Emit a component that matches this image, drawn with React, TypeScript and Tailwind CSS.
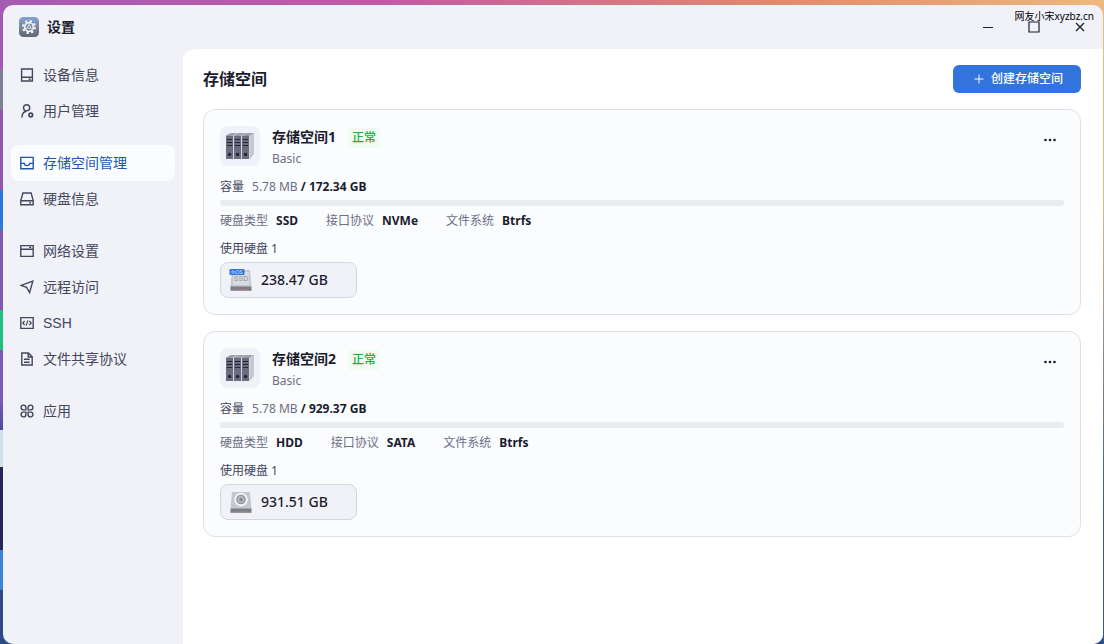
import type { ReactNode } from "react";

type NavItem = { label: string; icon: ReactNode; active?: boolean };

type Pool = {
  name: string;
  used: string;
  total: string;
  specs: { label: string; value: string }[];
  disk: { kind: "ssd" | "hdd"; size: string };
};

const POOLS: Pool[] = [
  {
    name: "存储空间1",
    used: "5.78 MB",
    total: "172.34 GB",
    specs: [
      { label: "硬盘类型", value: "SSD" },
      { label: "接口协议", value: "NVMe" },
      { label: "文件系统", value: "Btrfs" },
    ],
    disk: { kind: "ssd", size: "238.47 GB" },
  },
  {
    name: "存储空间2",
    used: "5.78 MB",
    total: "929.37 GB",
    specs: [
      { label: "硬盘类型", value: "HDD" },
      { label: "接口协议", value: "SATA" },
      { label: "文件系统", value: "Btrfs" },
    ],
    disk: { kind: "hdd", size: "931.51 GB" },
  },
];

function LineIcon({ children }: { children: ReactNode }) {
  return (
    <svg
      viewBox="0 0 14 14"
      className="size-3.5 shrink-0"
      fill="none"
      stroke="currentColor"
      strokeWidth="1.4"
      aria-hidden="true"
    >
      {children}
    </svg>
  );
}

const NAV: NavItem[][] = [
  [
    {
      label: "设备信息",
      icon: (
        <LineIcon>
          <path d="M1.6 1h10.8v12H1.6zM1.6 9.3h10.8M8.8 11.3h1.8" />
        </LineIcon>
      ),
    },
    {
      label: "用户管理",
      icon: (
        <LineIcon>
          <circle cx="6.6" cy="3.8" r="3.1" />
          <path d="M2 13.6c0-3.4 1.2-5.6 4.2-6.3" />
          <circle cx="10.8" cy="11" r="1.8" strokeWidth="1.7" />
        </LineIcon>
      ),
    },
  ],
  [
    {
      label: "存储空间管理",
      active: true,
      icon: (
        <LineIcon>
          <path d="M.8 1.4h12.4v11.4H.8zM.8 7.4h3.4c.3 1.4 1.3 2.2 2.8 2.2s2.5-.8 2.8-2.2h3.4" />
        </LineIcon>
      ),
    },
    {
      label: "硬盘信息",
      icon: (
        <LineIcon>
          <path d="M2.9 1h8.2l2.1 7.6v4.2H.8V8.6zM.8 8.7h12.4M9.2 10.8h1.8" />
        </LineIcon>
      ),
    },
  ],
  [
    {
      label: "网络设置",
      icon: (
        <LineIcon>
          <path d="M.8 1.6h12.4v10.8H.8zM.8 5.2h12.4M9 3.4h2.2" />
        </LineIcon>
      ),
    },
    {
      label: "远程访问",
      icon: (
        <LineIcon>
          <path d="M1.2 5.4 12.8 1.2 9.6 12.6 6.6 7.4z" />
        </LineIcon>
      ),
    },
    {
      label: "SSH",
      icon: (
        <LineIcon>
          <path d="M.8 1.6h12.4v10.8H.8z" />
          <path d="M4.6 5 2.8 7l1.8 2M9.4 5l1.8 2-1.8 2M7.9 4.4 6.1 9.6" strokeWidth="1.2" />
        </LineIcon>
      ),
    },
    {
      label: "文件共享协议",
      icon: (
        <LineIcon>
          <path d="M1.8 1h6.6l3.8 3.8V13H1.8zM8.2 1v4h4M4 7.2h5.6M4 10.2h5.6" />
        </LineIcon>
      ),
    },
  ],
  [
    {
      label: "应用",
      icon: (
        <LineIcon>
          <path d="M5.9 5.9H3.4a2.4 2.4 0 1 1 2.5-2.5zM8.1 5.9V3.4a2.4 2.4 0 1 1 2.5 2.5zM5.9 8.1v2.5a2.4 2.4 0 1 1-2.5-2.5zM8.1 8.1h2.5a2.4 2.4 0 1 1-2.5 2.5z" />
        </LineIcon>
      ),
    },
  ],
];

function SettingsLogo() {
  return (
    <svg viewBox="0 0 20 20" className="size-5" aria-hidden="true">
      <defs>
        <linearGradient id="logo" x1="0" y1="0" x2="0" y2="1">
          <stop offset="0" stopColor="#82a3d6" />
          <stop offset=".5" stopColor="#7b8799" />
          <stop offset="1" stopColor="#5f6675" />
        </linearGradient>
      </defs>
      <rect width="20" height="20" rx="4.5" fill="url(#logo)" />
      <circle
        cx="10"
        cy="10"
        r="6"
        fill="none"
        stroke="#eef2f7"
        strokeWidth="2"
        strokeDasharray="2.3 2.41"
      />
      <circle cx="10" cy="10" r="4.3" fill="none" stroke="#eef2f7" strokeWidth="1.7" />
      <circle cx="10" cy="10" r="1.5" fill="none" stroke="#dfe5ee" />
      <path d="M10 8.5V6M8.7 10.8l-2.2 1.3M11.3 10.8l2.2 1.3" stroke="#dfe5ee" strokeWidth=".9" />
    </svg>
  );
}

function RackIcon() {
  return (
    <svg viewBox="0 0 28 26" className="h-[26px] w-7" aria-hidden="true">
      <path d="M5 0h23v21l-4 5V3z" fill="#c6c8cf" />
      {[0, 8, 16].map((x) => (
        <g key={x}>
          <path d={`M${x} 2.5 ${x + 4.5} 0h7L${x + 7.5} 2.5z`} fill="#a0a2ae" />
          <rect x={x} y="2.5" width="7.2" height="23.5" rx=".6" fill="#6a6c80" />
          <path
            d={`M${x + 1} 6.5h5.2M${x + 1} 9.5h5.2M${x + 1} 12.5h5.2`}
            stroke="#23243a"
            strokeWidth="1.2"
          />
          <circle cx={x + 3.6} cy="21.5" r="1.7" fill="#23243a" />
        </g>
      ))}
    </svg>
  );
}

function DiskIcon({ kind }: { kind: "ssd" | "hdd" }) {
  return (
    <svg viewBox="0 0 24 24" className="size-6" aria-hidden="true">
      <path d="M3 2h18l1.5 17h-21z" fill="#c4c8cf" />
      <path d="M1.5 18.5h21v4.3h-21z" fill="#7a7e88" />
      <path d="M5.5 22h13" stroke="#d8866a" strokeWidth="1.2" strokeDasharray="1.5 1" />
      {kind === "ssd" ? (
        <>
          <path d="M4.5 4h15l.8 13H3.7z" fill="#d9dce1" />
          <text
            x="12"
            y="13"
            textAnchor="middle"
            fontSize="7"
            fontFamily="Liberation Sans"
            fill="#8d929c"
          >
            SSD
          </text>
          <rect x=".5" y="1" width="15" height="6" rx="1" fill="#2f74dc" />
          <text
            x="8"
            y="6"
            textAnchor="middle"
            fontSize="5"
            fontFamily="Liberation Sans"
            fill="#dbe8ff"
          >
            fnOS
          </text>
        </>
      ) : (
        <>
          <circle cx="12" cy="9.5" r="6.8" fill="#f3f4f6" />
          <circle cx="12" cy="9.5" r="4.8" fill="#9297a1" />
          <circle cx="12" cy="9.5" r="3.4" fill="#b3b7bf" />
          <circle cx="12" cy="9.5" r="1.6" fill="#7d828d" />
        </>
      )}
    </svg>
  );
}

function PoolCard({ pool }: { pool: Pool }) {
  return (
    <section className="rounded-xl border border-[#dfe0ea] bg-[#fbfcfe] p-4 text-xs leading-[18px] text-[#43465c]">
      <div className="flex items-start gap-3">
        <div className="flex size-10 shrink-0 items-center justify-center rounded-lg bg-[#f1f2f9]">
          <RackIcon />
        </div>
        <div className="h-10">
          <div className="flex items-end gap-3">
            <h2 className="text-sm leading-[22px] font-bold text-[#1b1c2e]">{pool.name}</h2>
            <span className="rounded bg-[#effcf2] px-1 leading-5 font-medium text-[#16b13c]">
              正常
            </span>
          </div>
          <p className="pt-0.5 text-[#6b6e85]">Basic</p>
        </div>
        <button
          type="button"
          aria-label="更多"
          className="ml-auto flex size-7 cursor-pointer items-center justify-center text-[#1b1c2e]"
        >
          <svg viewBox="0 0 12 4" className="h-1 w-3" fill="currentColor" aria-hidden="true">
            <circle cx="1.5" cy="2" r="1.3" />
            <circle cx="6" cy="2" r="1.3" />
            <circle cx="10.5" cy="2" r="1.3" />
          </svg>
        </button>
      </div>

      <div className="mt-3 flex gap-2">
        <span>容量</span>
        <span className="text-[#6b6e85]">
          {pool.used} <b className="font-bold text-[#1b1c2e]">/ {pool.total}</b>
        </span>
      </div>
      <div className="mt-1 h-1.5 rounded-full bg-[#ebecf0]" />

      <dl className="mt-1.5 flex gap-7">
        {pool.specs.map((spec) => (
          <div key={spec.label} className="flex gap-2">
            <dt className="text-[#6b6e85]">{spec.label}</dt>
            <dd className="font-bold text-[#1b1c2e]">{spec.value}</dd>
          </div>
        ))}
      </dl>

      <p className="mt-2.5">使用硬盘 1</p>
      <div className="mt-1 flex">
        <div className="flex h-9 items-center gap-2 rounded-lg border border-[#d3d4e0] bg-[#f1f2f8] pr-7 pl-2 text-sm font-medium text-[#1b1c2e]">
          <DiskIcon kind={pool.disk.kind} />
          {pool.disk.size}
        </div>
      </div>
    </section>
  );
}

export default function App() {
  return (
    <div className="relative flex h-screen flex-col bg-[#2e4a86] pt-[5px] pr-px pl-[3px] font-['Noto_Sans','Noto_Sans_CJK_SC',sans-serif]">
      {/* desktop wallpaper showing round the window */}
      <div className="absolute inset-x-0 top-0 h-4 bg-[linear-gradient(90deg,#a55bb4,#c25ba6_35%,#e08a6c_70%,#edb87e)]" />
      <div className="absolute inset-y-0 right-0 w-px bg-[linear-gradient(180deg,#edb87e_30%,#2f5c94_80%)]" />
      <div className="absolute inset-y-0 left-0 w-[3px] bg-[linear-gradient(180deg,#a35ab2_0_70px,#7d7f94_70px_110px,#9355ae_110px_190px,#2d78dc_190px_230px,#8558ae_230px_310px,#20c07a_310px_350px,#7c5bb4_350px_400px,#4a4aa0_430px,#cfe2ea_430px_467px,#272458_467px_550px,#3b82dc_550px_590px,#2e4a86_590px)]" />

      <div className="relative flex min-h-0 flex-1 flex-col overflow-hidden rounded-[10px] bg-[#f1f2f8]">
        <header className="flex h-11 shrink-0 items-center gap-2 pl-4">
          <SettingsLogo />
          <h1 className="text-sm font-bold text-[#1b1c2e]">设置</h1>
          <div className="ml-auto flex text-[#1b1c2e]">
            <button
              type="button"
              aria-label="最小化"
              className="flex h-7 w-[46px] cursor-pointer items-center justify-center"
            >
              <svg viewBox="0 0 12 12" className="size-3" stroke="currentColor" aria-hidden="true">
                <path d="M1 6.5h10" />
              </svg>
            </button>
            <button
              type="button"
              aria-label="最大化"
              className="flex h-7 w-[46px] cursor-pointer items-center justify-center"
            >
              <svg
                viewBox="0 0 12 12"
                className="size-3"
                fill="none"
                stroke="currentColor"
                strokeWidth="1.2"
                aria-hidden="true"
              >
                <path d="M1 1h10v10H1z" />
              </svg>
            </button>
            <button
              type="button"
              aria-label="关闭"
              className="flex h-7 w-[46px] cursor-pointer items-center justify-center"
            >
              <svg
                viewBox="0 0 12 12"
                className="size-3"
                stroke="currentColor"
                strokeWidth="1.3"
                aria-hidden="true"
              >
                <path d="m2 2 8 8M10 2l-8 8" />
              </svg>
            </button>
          </div>
        </header>

        <div className="flex min-h-0 flex-1">
          <nav className="flex w-[180px] shrink-0 flex-col gap-4 px-2 pt-2 font-['Liberation_Sans','Noto_Sans_CJK_SC',sans-serif]">
            {NAV.map((group) => (
              <ul key={group[0].label}>
                {group.map((item) => (
                  <li key={item.label}>
                    <a
                      href="#"
                      aria-current={item.active ? "page" : undefined}
                      className={`flex h-9 items-center gap-[9px] rounded-lg px-[9px] text-sm ${
                        item.active ? "bg-[#fbfcfe] text-[#1d55b4]" : "text-[#43465c]"
                      }`}
                    >
                      {item.icon}
                      {item.label}
                    </a>
                  </li>
                ))}
              </ul>
            ))}
          </nav>

          <main className="flex min-w-0 flex-1 flex-col gap-4 rounded-tl-xl bg-white pt-4 pr-[22px] pl-5">
            <div className="flex items-center justify-between">
              <h2 className="text-base leading-7 font-bold text-[#1b1c2e]">存储空间</h2>
              <button
                type="button"
                className="flex h-7 cursor-pointer items-center gap-1.5 rounded-md bg-[#3373dc] pr-[18px] pl-5 text-xs font-medium text-white"
              >
                <svg viewBox="0 0 12 12" className="size-3" stroke="currentColor" aria-hidden="true">
                  <path d="M6 1.5v9M1.5 6h9" />
                </svg>
                创建存储空间
              </button>
            </div>
            {POOLS.map((pool) => (
              <PoolCard key={pool.name} pool={pool} />
            ))}
          </main>
        </div>
      </div>

      <span className="absolute top-2.5 right-2.5 text-[10px] leading-3 text-black">
        网友小宋xyzbz.cn
      </span>
    </div>
  );
}
